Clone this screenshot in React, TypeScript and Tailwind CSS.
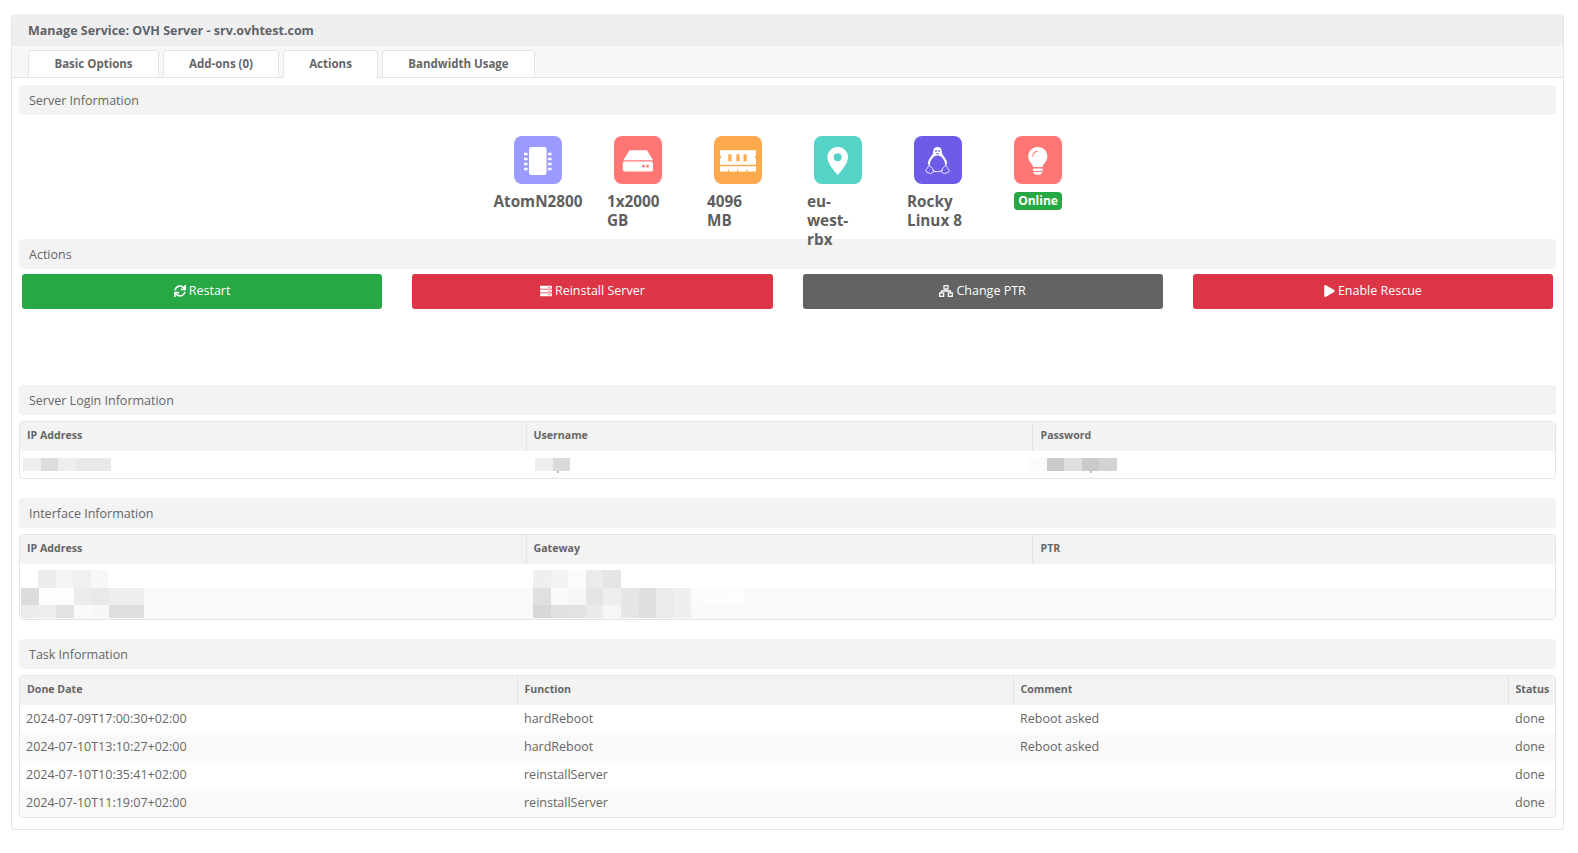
import React from "react";
import { FaSync, FaServer, FaPlay } from "react-icons/fa";

function SectionBar({ children, className = "" }: { children: React.ReactNode; className?: string }) {
  return (
    <div className={`h-[30px] rounded-[4px] bg-[#f3f3f3] pl-[10px] pt-px text-[12.5px] leading-[30px] text-[#666666] ${className}`}>
      {children}
    </div>
  );
}

function Mosaic({ colors, w = 17.6, h }: { colors: string[]; w?: number; h: number }) {
  return (
    <div className="flex">
      {colors.map((c, i) => (
        <div key={i} className="shrink-0" style={{ width: w, height: h, backgroundColor: c }} />
      ))}
    </div>
  );
}

function IconBox({ color, children }: { color: string; children: React.ReactNode }) {
  return (
    <div className="h-12 w-12 shrink-0 rounded-[8px]" style={{ backgroundColor: color }}>
      <svg viewBox="0 0 48 48" className="h-12 w-12" fill="#fff">
        {children}
      </svg>
    </div>
  );
}

const CpuIcon = () => (
  <IconBox color="#9b9bff">
    <rect x="15" y="11" width="17.5" height="28" rx="2.2" />
    {[18, 23, 28, 33].map((y) => (
      <g key={y}>
        <path d={`M10 ${y - 1.3}h3l1 1.3-1 1.3h-3z`} />
        <path d={`M37.5 ${y - 1.3}h-3l-1 1.3 1 1.3h3z`} />
      </g>
    ))}
  </IconBox>
);

const DriveIcon = () => (
  <IconBox color="#ff7675">
    <path d="M15.5 14.3h17.5l6 10H9.3z" />
    <rect x="8.8" y="25.5" width="30.2" height="10" rx="2" />
    <circle cx="29.5" cy="30.2" r="1.4" fill="#ff7675" />
    <circle cx="33.5" cy="30.2" r="1.4" fill="#ff7675" />
  </IconBox>
);

const RamIcon = () => (
  <IconBox color="#fdaa4f">
    <path d="M6 14.3h36v5l-1.5 1.7 1.5 1.7v6H6v-6l1.500-1.700L6 19.300z" />
    <rect x="14.3" y="18.3" width="3.2" height="7" fill="#fdaa4f" />
    <rect x="22.4" y="18.3" width="3.2" height="7" fill="#fdaa4f" />
    <rect x="29.5" y="18.3" width="3.2" height="7" fill="#fdaa4f" />
    <path d="M6 30.2h36v5.2h-8.6v-2h-1.2v2h-8v-2h-1.2v2h-8v-2h-1.2v2H6z" />
  </IconBox>
);

const PinIcon = () => (
  <IconBox color="#55d3c7">
    <path d="M23.7 11c5.700 0 10.300 4.500 10.300 10.200 0 5.400-5.600 12.600-10.300 17.800-4.700-5.200-10.300-12.400-10.300-17.800C13.400 15.500 18 11 23.700 11z" />
    <circle cx="23.7" cy="21.2" r="4" fill="#55d3c7" />
  </IconBox>
);

const TuxIcon = () => (
  <IconBox color="#6c5ce7">
    <path d="M23.500 11c2.800 0 4.300 2 4.300 4.500 0 2 .8 3.300 2 4.800 2 2.500 3.300 5 3.300 7.700l-2.100 1.500c.4-3.400-1.300-6.600-3.500-8.600-1.200-1-2.500-1.500-4-1.500s-2.800.5-4 1.500c-2.200 2-3.900 5.200-3.500 8.600l-2.100-1.500c0-2.700 1.300-5.200 3.300-7.700 1.200-1.500 2-2.800 2-4.800 0-2.500 1.500-4.500 4.300-4.500z" />
    <ellipse cx="22" cy="15" rx="0.8" ry="1.100" fill="#6c5ce7" />
    <ellipse cx="25" cy="15" rx="0.8" ry="1.100" fill="#6c5ce7" />
    <path d="M21.800 17h3.400l-1.700 1.400z" fill="#6c5ce7" />
    <path d="M18.500 34.200c1.600 1.100 3.200 1.500 5 1.500s3.400-.4 5-1.500" fill="none" stroke="#fff" strokeWidth="0.900" />
    <path
      d="M15 29.300l3 2.500 2 3.700-3.300 2.200-4.300-1.600-.7-1.700 1.200-1.600zM32 29.300l-3 2.500-2 3.700 3.300 2.200 4.300-1.600.7-1.700-1.200-1.600z"
      fill="none"
      stroke="#fff"
      strokeWidth="0.800"
    />
  </IconBox>
);

const BulbIcon = () => (
  <IconBox color="#ff7675">
    <path d="M23.800 11c5.300 0 9.600 4.100 9.600 9.300 0 3.100-1.400 5.100-2.900 7-1 1.300-1.700 2.400-1.900 3.700h-9.600c-.2-1.300-.9-2.400-1.900-3.700-1.500-1.900-2.900-3.900-2.900-7C14.200 15.100 18.500 11 23.800 11z" />
    <path d="M18.800 20.500c0-2.900 2.100-4.900 5-5.200" fill="none" stroke="#ff7675" strokeWidth="1.100" />
    <rect x="19" y="32.600" width="9.600" height="2.500" rx="0.500" />
    <path d="M19.300 35.900h9c0 1.600-1.600 2.900-4.500 2.900s-4.500-1.300-4.500-2.900z" />
  </IconBox>
);

const NetIcon = () => (
  <svg viewBox="0 0 14 12" className="h-[12px] w-[14px]" fill="none" stroke="#fff" strokeWidth="1.300">
    <rect x="5" y="0.700" width="4" height="3.300" />
    <path d="M7 4v2M2.500 8V6h9v2" />
    <rect x="0.700" y="8" width="4" height="3.300" />
    <rect x="9.300" y="8" width="4" height="3.300" />
  </svg>
);

function Spec({ icon, text, badge }: { icon: React.ReactNode; text?: string; badge?: string }) {
  return (
    <div className="flex flex-col items-center px-[19px]">
      {icon}
      {text && <div className="mt-[7.500px] text-[15.3px] font-bold leading-[19px] text-[#5f5f5f]">{text}</div>}
      {badge && (
        <div className="mt-2 flex h-[18px] w-12 items-center justify-center rounded-[4px] bg-[#28a745] text-[12px] font-bold text-white">
          {badge}
        </div>
      )}
    </div>
  );
}

function ActionButton({ color, icon, label }: { color: string; icon: React.ReactNode; label: string }) {
  return (
    <div className={`flex h-[35px] items-center justify-center gap-[3px] rounded-[3px] pb-px text-[12.5px] text-white ${color}`}>
      {icon}
      <span>{label}</span>
    </div>
  );
}

const Th = ({ children, className = "" }: { children?: React.ReactNode; className?: string }) => (
  <th className={`h-[29px] border-l border-[#e4e4e4] bg-[#f3f3f3] pb-px text-left text-[10.6px] font-bold text-[#666666] first:border-l-0 ${className}`}>
    {children}
  </th>
);

const wrap = "overflow-hidden rounded-[4px] border border-[#e4e4e4]";

const tasks = [
  ["2024-07-09T17:00:30+02:00", "hardReboot", "Reboot asked"],
  ["2024-07-10T13:10:27+02:00", "hardReboot", "Reboot asked"],
  ["2024-07-10T10:35:41+02:00", "reinstallServer", ""],
  ["2024-07-10T11:19:07+02:00", "reinstallServer", ""],
];

export default function App() {
  return (
    <div className="min-h-[853px] bg-white pb-[23px] pl-[11px] pr-[14px] pt-[14px] [font-family:'Open_Sans',sans-serif]">
      <div className="h-[816px] rounded-[4px] border border-t-0 border-[#e4e4e4] bg-white">
        <div className="flex h-8 items-center rounded-t-[4px] bg-[#efefef] pl-[16px] pt-[2px] text-[12.5px] font-bold text-[#5f6368]">
          Manage Service: OVH Server - srv.ovhtest.com
        </div>
        <div className="flex h-[32px] items-end gap-[4px] border-b border-[#e4e4e4] bg-[#f8f8f8] pl-[16px]">
          {[
            ["Basic Options", "w-[131px]", false],
            ["Add-ons (0)", "w-[116px]", false],
            ["Actions", "w-[95px]", true],
            ["Bandwidth Usage", "w-[153px]", false],
          ].map(([label, w, active]) => (
            <div
              key={label as string}
              className={`flex h-[27px] items-center justify-center rounded-t-[4px] border border-b-0 border-[#e4e4e4] bg-white text-[11.5px] font-bold text-[#666666] ${w} ${active ? "relative top-px h-[28px] pb-[2px] text-[#555555]" : ""}`}
            >
              {label as string}
            </div>
          ))}
        </div>

        <div className="px-[7px] pt-[7px]">
          <SectionBar>Server Information</SectionBar>
          <div className="h-[124px] pl-px pt-[21px]">
            <div className="mx-auto grid w-[600px] grid-cols-6">
              <Spec icon={<CpuIcon />} text="AtomN2800" />
              <Spec icon={<DriveIcon />} text="1x2000 GB" />
              <Spec icon={<RamIcon />} text="4096 MB" />
              <Spec icon={<PinIcon />} text="eu-west-rbx" />
              <Spec icon={<TuxIcon />} text="Rocky Linux 8" />
              <Spec icon={<BulbIcon />} badge="Online" />
            </div>
          </div>

          <SectionBar>Actions</SectionBar>
          <div className="mt-[5px] grid grid-cols-4 gap-[30px] px-[3px]">
            <ActionButton color="bg-[#28a745]" icon={<FaSync className="h-[12px] w-[12px]" />} label="Restart" />
            <ActionButton color="bg-[#dc3545]" icon={<FaServer className="h-[12px] w-[12px]" />} label="Reinstall Server" />
            <ActionButton color="bg-[#636363]" icon={<NetIcon />} label="Change PTR" />
            <ActionButton color="bg-[#dc3545]" icon={<FaPlay className="h-[12px] w-[11px]" />} label="Enable Rescue" />
          </div>

          <SectionBar className="mt-[76px]">Server Login Information</SectionBar>
          <div className={`mt-[6px] ${wrap}`}>
            <table className="w-full table-fixed border-collapse">
              <colgroup>
                <col className="w-[506px]" />
                <col className="w-[506px]" />
                <col />
              </colgroup>
              <thead>
                <tr>
                  <Th className="pl-[7px]">IP Address</Th>
                  <Th className="pl-[7px]">Username</Th>
                  <Th className="pl-[8px]">Password</Th>
                </tr>
              </thead>
              <tbody>
                <tr className="h-[27px] align-top">
                  <td className="pl-[3px] pt-[7px]">
                    <Mosaic h={13} colors={["#eeeeee", "#dddddd", "#eeeeee", "#e8e8e8", "#e8e8e8"]} />
                  </td>
                  <td className="pl-[9px] pt-[7px]">
                    <Mosaic h={13} colors={["#eeeeee", "#dadada"]} />
                    <div className="ml-[22px] h-[2px] w-[2px] bg-[#bbbbbb]" />
                  </td>
                  <td className="pt-[7px]">
                    <div className="-ml-[3px]">
                      <Mosaic h={13} colors={["#fbfbfb", "#cbcbcb", "#dfdfdf", "#cbcbcb", "#d3d3d3"]} />
                      <div className="ml-[61px] h-[2px] w-[2px] bg-[#bbbbbb]" />
                    </div>
                  </td>
                </tr>
              </tbody>
            </table>
          </div>

          <SectionBar className="mt-[19px]">Interface Information</SectionBar>
          <div className={`mt-[6px] ${wrap}`}>
            <table className="w-full table-fixed border-collapse">
              <colgroup>
                <col className="w-[506px]" />
                <col className="w-[506px]" />
                <col />
              </colgroup>
              <thead>
                <tr>
                  <Th className="pl-[7px]">IP Address</Th>
                  <Th className="pl-[7px]">Gateway</Th>
                  <Th className="pl-[8px]">PTR</Th>
                </tr>
              </thead>
              <tbody>
                <tr className="h-[24px] align-top">
                  <td className="pl-[18px] pt-[6px]">
                    <Mosaic h={18} colors={["#ececec", "#f4f4f4", "#f0f0f0", "#f8f8f8"]} />
                  </td>
                  <td className="pl-[7px] pt-[6px]">
                    <Mosaic h={18} colors={["#efefef", "#f3f3f3", "#fbfbfb", "#ebebeb", "#e5e5e5"]} />
                  </td>
                  <td />
                </tr>
                <tr className="h-[31px] bg-[#f9f9f9] align-top">
                  <td className="pl-px">
                    <Mosaic h={17} colors={["#dcdcdc", "#fdfdfd", "#fdfdfd", "#ececec", "#e9e9e9", "#eeeeee", "#eeeeee"]} />
                    <Mosaic h={13} colors={["#ebebeb", "#eeeeee", "#e2e2e2", "#fafafa", "#f8f8f8", "#dedede", "#dedede"]} />
                  </td>
                  <td className="pl-[7px]">
                    <Mosaic h={17} colors={["#e0e0e0", "#fafafa", "#f6f6f6", "#e5e5e5", "#eeeeee", "#e6e6e6", "#dfdfdf", "#ececec", "#efefef", "#fbfbfb", "#fcfcfc", "#fdfdfd"]} />
                    <Mosaic h={13} colors={["#d8d8d8", "#e0e0e0", "#e2e2e2", "#eaeaea", "#f6f6f6", "#e6e6e6", "#dedede", "#ebebeb", "#efefef"]} />
                  </td>
                  <td />
                </tr>
              </tbody>
            </table>
          </div>

          <SectionBar className="mt-[19px]">Task Information</SectionBar>
          <div className={`mt-[6px] ${wrap}`}>
            <table className="w-full table-fixed border-collapse">
              <colgroup>
                <col className="w-[497px]" />
                <col className="w-[496px]" />
                <col className="w-[495px]" />
                <col />
              </colgroup>
              <thead>
                <tr>
                  <Th className="pl-[7px]">Done Date</Th>
                  <Th className="pl-[7px]">Function</Th>
                  <Th className="pl-[7px]">Comment</Th>
                  <Th className="pl-[7px]">Status</Th>
                </tr>
              </thead>
              <tbody>
                {tasks.map((t, i) => (
                  <tr key={i} className={`h-[28px] text-[12.5px] text-[#666666] ${i % 2 ? "bg-[#f9f9f9]" : ""}`}>
                    <td className="pl-[6px]">{t[0]}</td>
                    <td className="pl-[7px]">{t[1]}</td>
                    <td className="pl-[7px]">{t[2]}</td>
                    <td className="pl-[7px]">done</td>
                  </tr>
                ))}
              </tbody>
            </table>
          </div>
        </div>
      </div>
    </div>
  );
}
